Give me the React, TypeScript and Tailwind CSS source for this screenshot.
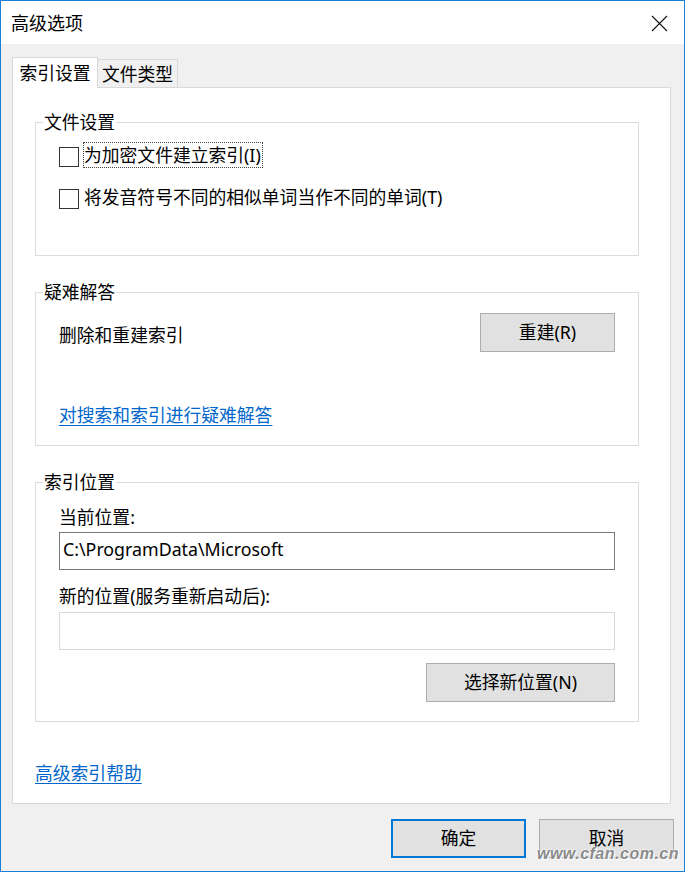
import React from "react";

function Checkbox() {
  return <div className="mt-[5px] h-[20px] w-[20px] shrink-0 border border-[#333333] bg-white" />;
}

function Group({ label, children, className }: { label: string; children: React.ReactNode; className?: string }) {
  return (
    <div className={`relative border border-[#dcdcdc] ${className ?? ""}`}>
      <span className="absolute left-[7px] top-[-13px] bg-white px-[1px] leading-[24px]">{label}</span>
      {children}
    </div>
  );
}

function Btn({ children, className }: { children: React.ReactNode; className?: string }) {
  return (
    <div className={`flex items-center justify-center border border-[#adadad] bg-[#e1e1e1] ${className ?? ""}`}>
      {children}
    </div>
  );
}

export default function App() {
  return (
    <div className="relative flex h-[872px] w-[685px] flex-col border border-[#1a7fd6] bg-[#f0f0f0] text-[17.8px] text-black font-['Noto_Sans','Noto_Sans_CJK_SC',sans-serif]">
      {/* Title bar */}
      <div className="flex h-[43px] shrink-0 items-center justify-between bg-white pl-[10px] pr-[16px]">
        <span className="text-[18px] leading-[24px]">高级选项</span>
        <svg width="17" height="17" viewBox="0 0 17 17" className="mt-[1px]">
          <path d="M1 1 L16 16 M16 1 L1 16" stroke="#111" strokeWidth="1.1" fill="none" />
        </svg>
      </div>

      {/* Body */}
      <div className="flex flex-1 flex-col pl-[11px] pr-[13px] pt-[13px]">
        {/* Tabs */}
        <div className="flex h-[30px] items-end">
          <div className="relative z-10 -mb-px flex h-[31px] w-[86px] items-center justify-center border border-b-0 border-[#d9d9d9] bg-white pb-[1px] leading-[24px]">
            索引设置
          </div>
          <div className="flex h-[28px] w-[80px] items-center justify-center border-r border-t border-[#d9d9d9] bg-[#f0f0f0] pt-[1px] leading-[24px]">
            文件类型
          </div>
        </div>

        {/* Panel */}
        <div className="flex h-[717px] flex-col border border-[#d9d9d9] bg-white pl-[22px] pr-[31px] pt-[34px]">
          <Group label="文件设置" className="h-[134px] pl-[23px] pt-[19px]">
            <div className="flex items-start">
              <Checkbox />
              <span className="ml-[4px] border border-dotted border-[#444] pr-[1px] leading-[24px]">为加密文件建立索引(I)</span>
            </div>
            <div className="mt-[16px] flex items-start">
              <Checkbox />
              <span className="ml-[4px] border border-transparent leading-[24px]">将发音符号不同的相似单词当作不同的单词(T)</span>
            </div>
          </Group>

          <Group label="疑难解答" className="mt-[36px] h-[154px] px-[23px] pt-[20px]">
            <div className="flex items-center justify-between">
              <span className="mt-[4px] leading-[24px]">删除和重建索引</span>
              <Btn className="h-[39px] w-[135px]">重建(R)</Btn>
            </div>
            <div className="mt-[51px] leading-[24px]">
              <span className="text-[#0066cc] underline underline-offset-[3px]">对搜索和索引进行疑难解答</span>
            </div>
          </Group>

          <Group label="索引位置" className="mt-[36px] h-[240px] px-[23px] pt-[22px]">
            <div className="leading-[24px]">当前位置:</div>
            <div className="mt-[3px] flex h-[38px] items-center border border-[#7a7a7a] bg-white pb-[4px] pl-[3px] leading-[24px]">
              C:\ProgramData\Microsoft
            </div>
            <div className="mt-[14px] leading-[24px]">新的位置(服务重新启动后):</div>
            <div className="mt-[4px] h-[38px] border border-[#d9d9d9] bg-white" />
            <div className="mt-[13px] flex justify-end">
              <Btn className="h-[39px] w-[189px]">选择新位置(N)</Btn>
            </div>
          </Group>

          <div className="mt-[39px] leading-[24px]">
            <span className="text-[#0066cc] underline underline-offset-[3px]">高级索引帮助</span>
          </div>
        </div>

        {/* Bottom buttons */}
        <div className="mt-[15px] flex justify-end gap-[13px]">
          <div className="flex h-[39px] w-[135px] items-center justify-center border-2 border-[#0078d7] bg-[#e1e1e1]">
            确定
          </div>
          <Btn className="-mr-[3px] h-[39px] w-[135px]">取消</Btn>
        </div>
      </div>

      {/* Watermark */}
      <div className="absolute bottom-[5px] right-[5px] text-[16px] font-bold italic tracking-[0.5px] text-[#8a8a8a] font-['Liberation_Sans',sans-serif] [text-shadow:0_0_2px_#ffffff,0_0_2px_#ffffff,1px_1px_1px_#ffffff]">
        www.cfan.com.cn
      </div>
    </div>
  );
}
